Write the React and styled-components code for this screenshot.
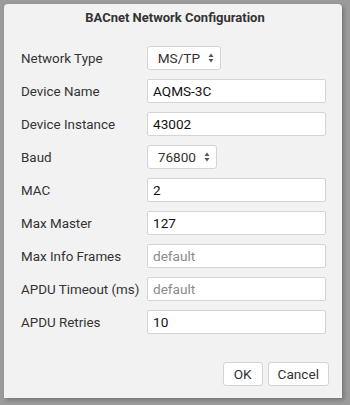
import React from 'react';
import styled, { createGlobalStyle } from 'styled-components';

const GlobalStyle = createGlobalStyle`
  html, body { margin: 0; padding: 0; }
  body {
    width: 350px;
    height: 405px;
    overflow: hidden;
    background: #9b9b9b;
    font-family: Roboto, "Liberation Sans", sans-serif;
  }
`;

const Backdrop = styled.div`
  width: 350px;
  height: 405px;
  padding: 4px 8px 7px 4px;
  box-sizing: border-box;
`;

const Dialog = styled.div`
  height: 100%;
  background: #f2f2f2;
  border-radius: 4px 4px 0 0;
  box-shadow: 2px 2px 4px rgba(0, 0, 0, 0.25);
  display: flex;
  flex-direction: column;
  padding: 0 13px 12px 17px;
  box-sizing: border-box;
`;

const Title = styled.h1`
  margin: 0;
  padding-top: 6px;
  height: 34px;
  font-size: 13px;
  font-weight: 700;
  color: #333;
  text-align: center;
`;

const Form = styled.div`
  display: flex;
  flex-direction: column;
  gap: 9px;
  padding-top: 2px;
  padding-right: 3px;
`;

const Row = styled.div`
  display: flex;
  align-items: center;
  height: 24px;
`;

const Label = styled.label`
  width: 126px;
  flex: none;
  font-size: 13.4px;
  color: #333;
`;

const TextInput = styled.input`
  flex: 1;
  min-width: 0;
  height: 24px;
  box-sizing: border-box;
  border: 1px solid #d4d4d4;
  border-radius: 2px;
  background: #fff;
  padding: 0 5px;
  font-family: inherit;
  font-size: 13.6px;
  color: #111;
  outline: none;
  &::placeholder { color: #8a8a8a; }
`;

const Select = styled.div`
  width: ${(p) => p.width}px;
  height: 24px;
  box-sizing: border-box;
  border: 1px solid #d4d4d4;
  border-radius: 3px;
  background: #fff;
  display: flex;
  align-items: center;
  justify-content: flex-end;
  padding-right: 6px;
  gap: 8px;
  font-size: 13.6px;
  color: #333;
`;

const Arrows = styled.svg`
  width: 6px;
  height: 10px;
  flex: none;
`;

const Footer = styled.div`
  margin-top: auto;
  display: flex;
  justify-content: flex-end;
  gap: 5px;
`;

const Button = styled.button`
  height: 24px;
  padding: 0 ${(p) => p.pad}px;
  box-sizing: border-box;
  border: 1px solid #d4d4d4;
  border-radius: 3px;
  background: #fff;
  font-family: inherit;
  font-size: 13.6px;
  color: #333;
`;

function Stepper() {
  return (
    <Arrows viewBox="0 0 6 10">
      <path d="M3 0.5 L5.5 4 L0.5 4 Z" fill="#555" />
      <path d="M3 9.5 L5.5 6 L0.5 6 Z" fill="#555" />
    </Arrows>
  );
}

const fields = [
  { label: 'Device Name', value: 'AQMS-3C' },
  { label: 'Device Instance', value: '43002' },
];

const fields2 = [
  { label: 'MAC', value: '2' },
  { label: 'Max Master', value: '127' },
  { label: 'Max Info Frames', placeholder: 'default' },
  { label: 'APDU Timeout (ms)', placeholder: 'default' },
  { label: 'APDU Retries', value: '10' },
];

function Field({ label, value, placeholder }) {
  return (
    <Row>
      <Label>{label}</Label>
      <TextInput defaultValue={value} placeholder={placeholder} />
    </Row>
  );
}

export default function App() {
  return (
    <>
      <GlobalStyle />
      <Backdrop>
        <Dialog>
          <Title>BACnet Network Configuration</Title>
          <Form>
            <Row>
              <Label>Network Type</Label>
              <Select width={74}>
                MS/TP <Stepper />
              </Select>
            </Row>
            {fields.map((f) => (
              <Field key={f.label} {...f} />
            ))}
            <Row>
              <Label>Baud</Label>
              <Select width={70}>
                76800 <Stepper />
              </Select>
            </Row>
            {fields2.map((f) => (
              <Field key={f.label} {...f} />
            ))}
          </Form>
          <Footer>
            <Button pad={10}>OK</Button>
            <Button pad={9}>Cancel</Button>
          </Footer>
        </Dialog>
      </Backdrop>
    </>
  );
}
